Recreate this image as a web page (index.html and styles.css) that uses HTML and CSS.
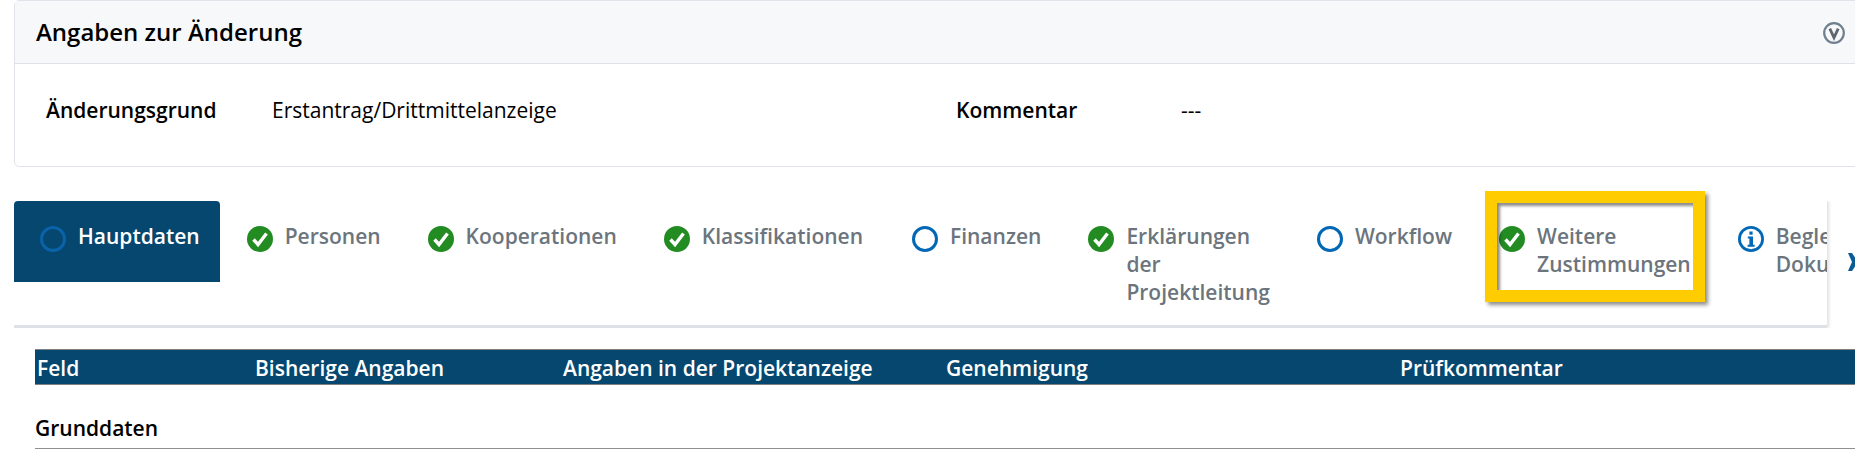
FILE: index.html
```html
<!DOCTYPE html>
<html lang="de">
    <head>
        <meta charset="UTF-8">
        <title>Angaben zur Änderung</title>
        <link rel="stylesheet" href="styles.css">
    </head>
    <body>
        <div class="card">
            <div class="card_head">
                <div class="card_title">Angaben zur Änderung</div>
                <svg class="collapse" viewBox="0 0 22 22">
                    <circle cx="11" cy="11" r="9.8" fill="none" stroke="#6f7f8f" stroke-width="2.2"/>
                    <path d="M6.8 6.6 L11 15.6 L15.2 6.6" fill="none" stroke="#5f6670" stroke-width="2.8"/>
                </svg>
            </div>
            <div class="card_body">
                <div class="label label_grund">Änderungsgrund</div>
                <div class="value value_grund">Erstantrag/Drittmittelanzeige</div>
                <div class="label label_komm">Kommentar</div>
                <div class="value">---</div>
            </div>
        </div>

        <div class="tabs_row">
            <div class="tabs">
                <div class="tab active">
                    <svg class="ico" viewBox="0 0 26 26"><circle cx="13" cy="13" r="11.5" fill="none" stroke="#0b62a8" stroke-width="3"/></svg>
                    <div>Hauptdaten</div>
                </div>
                <div class="tab">
                    <svg class="ico" viewBox="0 0 26 26"><circle cx="13" cy="13" r="13" fill="#228b22"/><path d="M6.5 13.5 L11 18.5 L19.5 7.5" fill="none" stroke="#fff" stroke-width="3.4"/></svg>
                    <div>Personen</div>
                </div>
                <div class="tab">
                    <svg class="ico" viewBox="0 0 26 26"><circle cx="13" cy="13" r="13" fill="#228b22"/><path d="M6.5 13.5 L11 18.5 L19.5 7.5" fill="none" stroke="#fff" stroke-width="3.4"/></svg>
                    <div>Kooperationen</div>
                </div>
                <div class="tab tab_klass">
                    <svg class="ico" viewBox="0 0 26 26"><circle cx="13" cy="13" r="13" fill="#228b22"/><path d="M6.5 13.5 L11 18.5 L19.5 7.5" fill="none" stroke="#fff" stroke-width="3.4"/></svg>
                    <div>Klassifikationen</div>
                </div>
                <div class="tab">
                    <svg class="ico" viewBox="0 0 26 26"><circle cx="13" cy="13" r="11.5" fill="none" stroke="#0068b4" stroke-width="3"/></svg>
                    <div>Finanzen</div>
                </div>
                <div class="tab">
                    <svg class="ico" viewBox="0 0 26 26"><circle cx="13" cy="13" r="13" fill="#228b22"/><path d="M6.5 13.5 L11 18.5 L19.5 7.5" fill="none" stroke="#fff" stroke-width="3.4"/></svg>
                    <div>Erklärungen<br>der<br>Projektleitung</div>
                </div>
                <div class="tab">
                    <svg class="ico" viewBox="0 0 26 26"><circle cx="13" cy="13" r="11.5" fill="none" stroke="#0068b4" stroke-width="3"/></svg>
                    <div>Workflow</div>
                </div>
                <div class="tab">
                    <svg class="ico" viewBox="0 0 26 26"><circle cx="13" cy="13" r="13" fill="#228b22"/><path d="M6.5 13.5 L11 18.5 L19.5 7.5" fill="none" stroke="#fff" stroke-width="3.4"/></svg>
                    <div>Weitere<br>Zustimmungen</div>
                </div>
                <div class="tab">
                    <svg class="ico" viewBox="0 0 26 26">
                        <circle cx="13" cy="13" r="11.6" fill="none" stroke="#0068b4" stroke-width="2.8"/>
                        <rect x="11.4" y="5.5" width="3.2" height="3.2" fill="#0068b4"/>
                        <path d="M9.8 10.6 H15 V18.8 H16.6 V20.8 H9.6 V18.8 H11.4 V12.6 H9.8 Z" fill="#0068b4"/>
                    </svg>
                    <div>Begleitende<br>Dokumente</div>
                </div>
            </div>
            <svg class="next" viewBox="0 0 10 18"><path d="M0 0 L4 0 L10 9 L4 18 L0 18 L4 9 Z" fill="#0b5c96"/></svg>
        </div>

        <div class="thead">
            <div>Feld</div>
            <div>Bisherige Angaben</div>
            <div>Angaben in der Projektanzeige</div>
            <div>Genehmigung</div>
            <div>Prüfkommentar</div>
        </div>
        <div class="section">Grunddaten</div>

        <div class="highlight"></div>
    </body>
</html>
```

FILE: styles.css
```css
html, body{
    margin: 0;
    height: 453px;
    overflow: hidden;
}

body{
    position: relative;
    width: 1855px;
    background-color: white;
    font-family: "Open Sans", sans-serif;
    color: black;
}

.card{
    width: 1900px;
    height: 167px;
    margin-left: 14px;
    border: 1px solid #e0e3ea;
    border-radius: 5px;
    box-sizing: border-box;
}

.card_head{
    display: flex;
    align-items: center;
    justify-content: space-between;
    height: 63px;
    padding: 0 68px 0 21px;
    background-color: #f7f8fa;
    border-bottom: 1px solid #dee2e8;
    box-sizing: border-box;
}

.card_title{
    margin-top: -2px;
    font-size: 24px;
    font-weight: 600;
}

.collapse{
    width: 22px;
    height: 22px;
    margin-top: 2px;
}

.card_body{
    display: flex;
    align-items: center;
    height: 85px;
    padding: 7px 0 0 31px;
    box-sizing: border-box;
    font-size: 21px;
}

.label{
    font-weight: 600;
}

.label_grund{
    width: 226px;
}

.value_grund{
    width: 684px;
}

.label_komm{
    width: 225px;
}

.tabs_row{
    display: flex;
    margin: 34px 0 0 14px;
}

.tabs{
    display: flex;
    flex-shrink: 0;
    width: 1813px;
    height: 127px;
    border-bottom: 3px solid #dee2e6;
    box-sizing: border-box;
    overflow: hidden;
    box-shadow: 2px 0 3px rgba(0,0,0,.12);
    clip-path: inset(0 -6px 0 0);
}

.tab{
    display: flex;
    flex-shrink: 0;
    gap: 12px;
    align-self: flex-start;
    padding: 21px 21px 0 26px;
    font-size: 21px;
    font-weight: 600;
    line-height: 28px;
    color: #6c757d;
}

.tab.active{
    height: 81px;
    margin-right: 1px;
    padding-right: 20px;
    background-color: #05476f;
    border-radius: 4px 4px 0 0;
    color: white;
    box-sizing: border-box;
}

.tab_klass{
    padding-right: 23px;
}

.ico{
    width: 26px;
    height: 26px;
    margin-top: 4px;
    flex-shrink: 0;
}

.next{
    width: 10px;
    height: 18px;
    margin: 52px 0 0 21px;
    flex-shrink: 0;
}

.thead{
    display: grid;
    grid-template-columns: 218px 308px 383px 454px 1fr;
    height: 36px;
    margin: 21px 0 0 35px;
    padding-left: 2px;
    background-color: #05476f;
    border-top: 1px solid #808080;
    border-bottom: 1px solid #808080;
    box-sizing: border-box;
    font-size: 21px;
    font-weight: 600;
    line-height: 36px;
    color: white;
}

.section{
    height: 64px;
    margin-left: 35px;
    border-bottom: 1px solid #909090;
    box-sizing: border-box;
    font-size: 21px;
    font-weight: 600;
    line-height: 86px;
}

.highlight{
    position: absolute;
    left: 1485px;
    top: 191px;
    width: 220px;
    height: 111px;
    border: 12px solid #ffcc00;
    box-sizing: border-box;
    box-shadow: 3px 3px 4px rgba(0,0,0,.45), inset 3px 3px 3px rgba(0,0,0,.45);
}
```
